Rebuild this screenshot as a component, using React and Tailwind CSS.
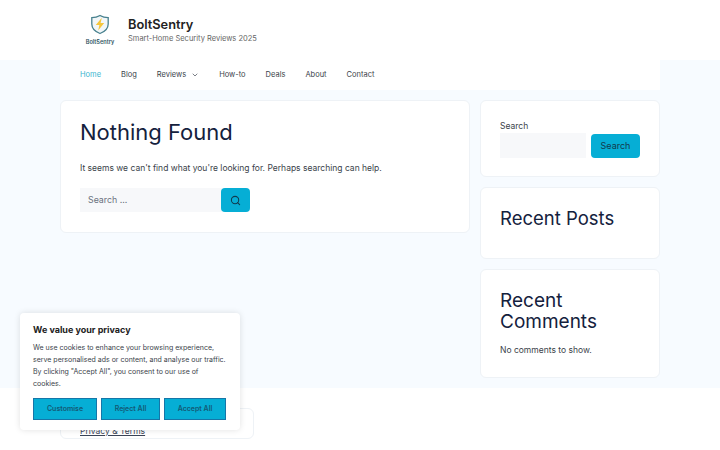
import React from "react";
import { Search, ChevronDown } from "lucide-react";

const links = ["Blog", "Reviews", "How-to", "Deals", "About", "Contact"];

const Logo = () => (
  <div className="flex w-[40px] flex-col items-center">
    <svg width="20" height="21" viewBox="0 0 20 21" fill="none">
      <path d="M10 1.5 C12.5 3 15.5 3.7 18.2 3.7 V10 C18.2 14.5 14.5 17.8 10 19.5 C5.5 17.8 1.8 14.5 1.8 10 V3.7 C4.5 3.7 7.5 3 10 1.5 Z" fill="#f1f6f8" stroke="#47808e" strokeWidth="1.3" />
      <path d="M11.8 3.8 L5.8 11 H9.4 L8.2 16.6 L14.2 9 H10.6 Z" fill="#f5c63c" />
    </svg>
    <span className="mt-[3px] text-[5.6px] leading-[8px] font-semibold text-[#2f5563]">BoltSentry</span>
  </div>
);

const Card = ({ className, children }) => (
  <div className={`rounded-[6px] border border-[#eef2f6] bg-white ${className}`}>{children}</div>
);

export default function App() {
  return (
    <div className="relative h-[450px] w-[720px] overflow-hidden bg-white font-['Inter',sans-serif] text-[#3a3f4a]">
      <header className="flex h-[60px] items-center pl-[80px]">
        <Logo />
        <div className="ml-[8px]">
          <div className="text-[12.8px] leading-[17px] font-semibold text-[#222]">BoltSentry</div>
          <div className="text-[7.5px] leading-[12px] text-[#666]">Smart-Home Security Reviews 2025</div>
        </div>
      </header>

      <div className="h-[328px] bg-[#f7fbff] px-[60px]">
        <nav className="flex h-[30px] items-center gap-[20px] bg-white pl-[20px] text-[7.5px] text-[#3a3f4a]">
          <span className="text-[#3bb5cf]">Home</span>
          {links.map((l) => (
            <span key={l} className="flex items-center">
              {l}
              {l === "Reviews" && <ChevronDown size={8} className="ml-[5px]" />}
            </span>
          ))}
        </nav>

        <div className="mt-[10px] flex items-start gap-[10px]">
          <Card className="h-[133px] w-[410px] px-[19px] pt-[17px]">
            <h1 className="text-[22px] leading-[29px] text-[#14213d]">Nothing Found</h1>
            <p className="mt-[14px] text-[8.5px] leading-[14px]">It seems we can't find what you're looking for. Perhaps searching can help.</p>
            <div className="mt-[13px] flex">
              <div className="flex h-[24px] w-[142px] items-center bg-[#f7f8fa] pl-[8px] text-[8.8px] text-[#6b7280]">Search ...</div>
              <div className="-ml-[1px] flex h-[24px] w-[29px] items-center justify-center rounded-[4px] bg-[#06aed5] text-[#123a4d]">
                <Search size={11} strokeWidth={2.2} />
              </div>
            </div>
          </Card>

          <div className="flex w-[180px] flex-col gap-[10px]">
            <Card className="h-[77px] px-[19px] pt-[19px]">
              <div className="text-[8.5px] leading-[13px]">Search</div>
              <div className="flex items-center gap-[5px]">
                <div className="h-[25px] w-[86px] bg-[#f7f8fa]" />
                <div className="flex h-[24px] w-[49px] items-center justify-center rounded-[4px] bg-[#06aed5] text-[9px] text-[#123a4d]">Search</div>
              </div>
            </Card>
            <Card className="h-[72px] px-[19px] pt-[19px]">
              <h2 className="text-[18.5px] leading-[22px] text-[#14213d]">Recent Posts</h2>
            </Card>
            <Card className="h-[109px] px-[19px] pt-[20px]">
              <h2 className="text-[19px] leading-[21px] text-[#14213d]">Recent Comments</h2>
              <p className="mt-[11px] text-[8.5px] leading-[14px]">No comments to show.</p>
            </Card>
          </div>
        </div>
      </div>

      <footer className="pt-[20px] pl-[60px]">
        <Card className="h-[31px] w-[194px] pl-[19px] pt-[15px]">
          <span className="block text-[8.5px] leading-[14px] text-[#3a4458] underline">Privacy &amp; Terms</span>
        </Card>
      </footer>

      {/* cookie banner */}
      <div className="absolute top-[313px] left-[20px] h-[117px] w-[220px] rounded-[4px] bg-white px-[13px] pt-[10px] shadow-[0_0_6px_rgba(0,0,0,0.12)]">
        <div className="text-[9px] leading-[13px] font-bold text-[#222]">We value your privacy</div>
        <p className="mt-[6px] text-[7px] leading-[12px] text-[#3a3f4a]">We use cookies to enhance your browsing experience, serve personalised ads or content, and analyse our traffic. By clicking "Accept All", you consent to our use of cookies.</p>
        <div className="mt-[8px] flex gap-[4px] text-[7px] font-semibold text-[#135a75]">
          <button className="h-[22px] w-[64px] border border-[#1576a8] bg-[#06aed5]">Customise</button>
          <button className="h-[22px] w-[59px] border border-[#1576a8] bg-[#06aed5]">Reject All</button>
          <button className="h-[22px] w-[62px] border border-[#1576a8] bg-[#06aed5]">Accept All</button>
        </div>
      </div>
    </div>
  );
}
